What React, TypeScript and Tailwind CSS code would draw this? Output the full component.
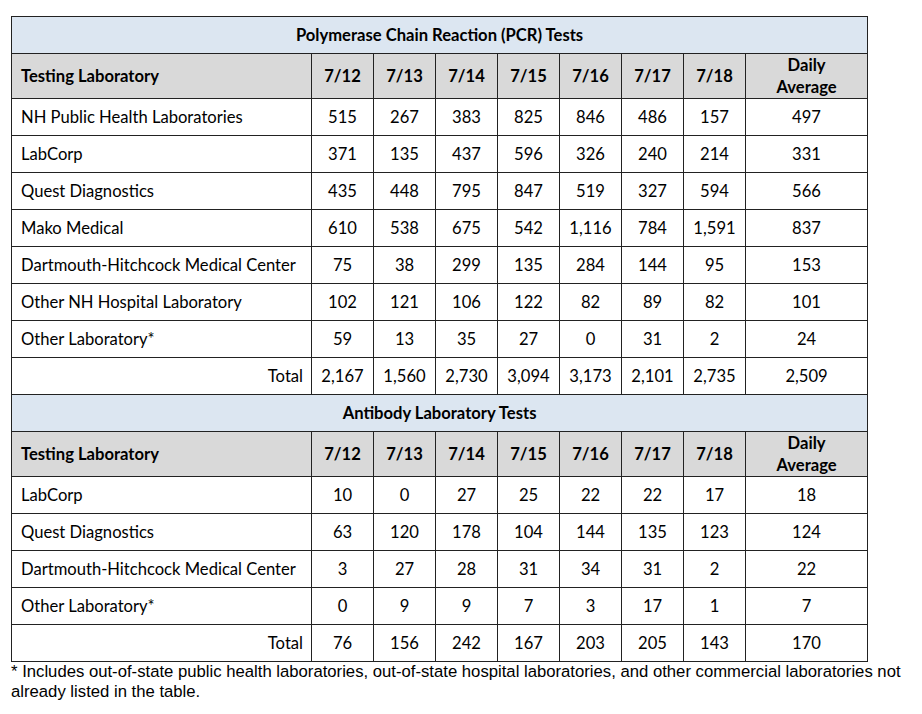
import React from "react";

const dates = ["7/12", "7/13", "7/14", "7/15", "7/16", "7/17", "7/18"];

const pcr: [string, string[], string][] = [
  ["NH Public Health Laboratories", ["515", "267", "383", "825", "846", "486", "157"], "497"],
  ["LabCorp", ["371", "135", "437", "596", "326", "240", "214"], "331"],
  ["Quest Diagnostics", ["435", "448", "795", "847", "519", "327", "594"], "566"],
  ["Mako Medical", ["610", "538", "675", "542", "1,116", "784", "1,591"], "837"],
  ["Dartmouth-Hitchcock Medical Center", ["75", "38", "299", "135", "284", "144", "95"], "153"],
  ["Other NH Hospital Laboratory", ["102", "121", "106", "122", "82", "89", "82"], "101"],
  ["Other Laboratory*", ["59", "13", "35", "27", "0", "31", "2"], "24"],
];
const pcrTotal: [string[], string] = [["2,167", "1,560", "2,730", "3,094", "3,173", "2,101", "2,735"], "2,509"];

const ab: [string, string[], string][] = [
  ["LabCorp", ["10", "0", "27", "25", "22", "22", "17"], "18"],
  ["Quest Diagnostics", ["63", "120", "178", "104", "144", "135", "123"], "124"],
  ["Dartmouth-Hitchcock Medical Center", ["3", "27", "28", "31", "34", "31", "2"], "22"],
  ["Other Laboratory*", ["0", "9", "9", "7", "3", "17", "1"], "7"],
];
const abTotal: [string[], string] = [["76", "156", "242", "167", "203", "205", "143"], "170"];

const cell = "border border-[#222] p-0";

function Section({
  title,
  rows,
  total,
}: {
  title: string;
  rows: [string, string[], string][];
  total: [string[], string];
}) {
  return (
    <>
      <tr className="h-[37px] bg-[#dce6f1]">
        <td colSpan={9} className={`${cell} text-center font-bold`}>
          {title}
        </td>
      </tr>
      <tr className="h-[45px] bg-[#d9d9d9] font-bold">
        <td className={`${cell} pl-[9px] text-left`}>Testing Laboratory</td>
        {dates.map((d) => (
          <td key={d} className={`${cell} text-center`}>
            {d}
          </td>
        ))}
        <td className={`${cell} text-center leading-[22px]`}>
          Daily
          <br />
          Average
        </td>
      </tr>
      {rows.map(([name, vals, avg]) => (
        <tr key={name} className="h-[37px]">
          <td className={`${cell} pl-[9px] text-left`}>{name}</td>
          {vals.map((v, i) => (
            <td key={i} className={`${cell} text-center`}>
              {v}
            </td>
          ))}
          <td className={`${cell} text-center`}>{avg}</td>
        </tr>
      ))}
      <tr className="h-[37px]">
        <td className={`${cell} pr-[8px] text-right`}>Total</td>
        {total[0].map((v, i) => (
          <td key={i} className={`${cell} text-center`}>
            {v}
          </td>
        ))}
        <td className={`${cell} text-center`}>{total[1]}</td>
      </tr>
    </>
  );
}

export default function App() {
  return (
    <div className="w-[922px] h-[714px] bg-white pl-[11px] pt-[16px] text-black">
      <table
        className="table-fixed border-collapse w-[856px] text-[16.6px]"
        style={{ fontFamily: "Lato, 'Open Sans', sans-serif" }}
      >
        <colgroup>
          <col className="w-[300px]" />
          {dates.map((d) => (
            <col key={d} className="w-[62px]" />
          ))}
          <col className="w-[122px]" />
        </colgroup>
        <tbody>
          <Section title="Polymerase Chain Reaction (PCR) Tests" rows={pcr} total={pcrTotal} />
          <Section title="Antibody Laboratory Tests" rows={ab} total={abTotal} />
        </tbody>
      </table>
      <p
        className="mt-[0px] w-[905px] text-[16.7px] leading-[20px] text-black"
        style={{ fontFamily: "'Liberation Sans', Arial, sans-serif" }}
      >
        * Includes out-of-state public health laboratories, out-of-state hospital laboratories, and other commercial laboratories not already listed in the table.
      </p>
    </div>
  );
}
